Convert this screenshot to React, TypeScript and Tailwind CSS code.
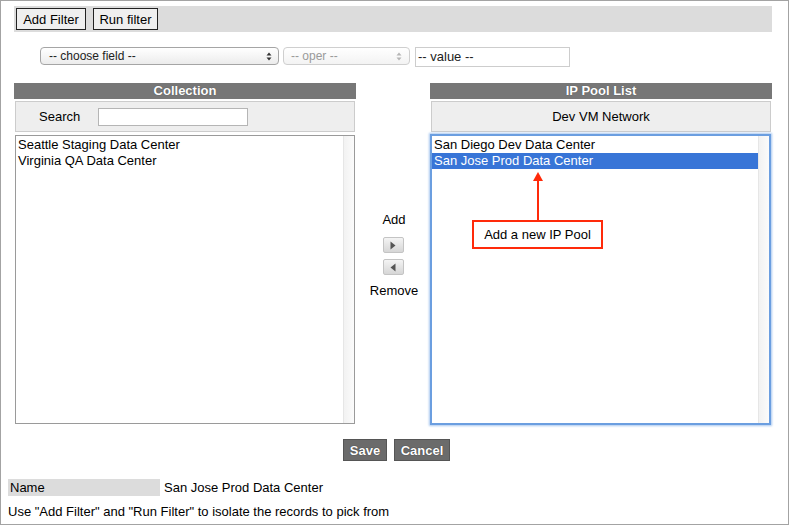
import React from "react";

const font = { fontFamily: '"Liberation Sans", Arial, sans-serif' };

function SelectArrows({ color }: { color: string }) {
  return (
    <svg width="6" height="9" viewBox="0 0 6 9" className="shrink-0">
      <path d="M0.5 3.5 L3 0.5 L5.5 3.5 Z" fill={color} />
      <path d="M0.5 5.5 L3 8.5 L5.5 5.5 Z" fill={color} />
    </svg>
  );
}

function ListBox({ items, selected, focus }: { items: string[]; selected?: number; focus?: boolean }) {
  return (
    <div
      className={
        focus
          ? "relative h-[291px] w-[341px] border-2 border-[#6b9ee0] shadow-[0_0_2px_1px_#a9c8ef] bg-white flex"
          : "relative h-[289px] w-[340px] ml-[1px] border border-[#9a9a9a] bg-white flex"
      }
    >
      <div className="flex-1 flex flex-col pt-[1px]">
        {items.map((t, i) => (
          <div
            key={t}
            className={
              i === selected
                ? "h-[16px] leading-[16px] pl-[2px] text-[13px] bg-[#3875d7] text-white"
                : "h-[16px] leading-[16px] pl-[2px] text-[13px] text-black"
            }
          >
            {t}
          </div>
        ))}
      </div>
      <div className="w-[11px] h-full border-l border-[#e6e6e6] bg-gradient-to-r from-[#f2f2f2] to-[#fbfbfb]" />
    </div>
  );
}

export default function App() {
  return (
    <div style={font} className="w-[790px] h-[526px] bg-white text-black">
      <div className="relative w-[789px] h-[525px] border border-[#a3a3a3] flex flex-col">
        {/* toolbar */}
        <div className="mt-[5px] ml-[13px] w-[758px] h-[26px] bg-[#dcdcdc] flex items-center pl-[2px] gap-[7px]">
          <button className="h-[22px] w-[70px] border border-[#222] bg-[#efefef] text-[13px] leading-none">
            Add Filter
          </button>
          <button className="h-[22px] w-[65px] border border-[#222] bg-[#efefef] text-[13px] leading-none">
            Run filter
          </button>
        </div>

        {/* filter row */}
        <div className="mt-[15px] ml-[39px] flex items-start">
          <div className="w-[239px] h-[18px] rounded-[4px] border border-[#a5a5a5] bg-gradient-to-b from-white to-[#ececec] flex items-center pl-[8px] pr-[6px] text-[12px] text-[#222]">
            <span className="flex-1">-- choose field --</span>
            <SelectArrows color="#333" />
          </div>
          <div className="ml-[4px] w-[127px] h-[18px] rounded-[4px] border border-[#cfcfcf] bg-gradient-to-b from-white to-[#f3f3f3] flex items-center pl-[7px] pr-[7px] text-[12px] text-[#9a9a9a]">
            <span className="flex-1">-- oper --</span>
            <SelectArrows color="#b5b5b5" />
          </div>
          <div className="ml-[5px] w-[155px] h-[20px] border border-[#cdcdcd] bg-white flex items-center pl-[2px] text-[13px] text-[#222]">
            -- value --
          </div>
        </div>

        {/* panels */}
        <div className="mt-[16px] ml-[13px] flex">
          {/* left */}
          <div className="w-[342px] flex flex-col">
            <div className="h-[16px] bg-[#777777] text-white font-bold text-[13px] leading-[16px] text-center [text-shadow:0_0_1px_#444]">
              Collection
            </div>
            <div className="mt-[2px] ml-[1px] w-[340px] h-[31px] bg-[#eeeeee] border border-[#cccccc] flex items-center">
              <span className="ml-[23px] w-[59px] text-[13px]">Search</span>
              <div className="w-[150px] h-[18px] border border-[#b5b5b5] bg-white" />
            </div>
            <div className="mt-[3px]">
              <ListBox items={["Seattle Staging Data Center", "Virginia QA Data Center"]} />
            </div>
          </div>

          {/* middle */}
          <div className="w-[74px] flex flex-col items-center pt-[129px]">
            <div className="text-[13px] leading-[16px] ml-[2px]">Add</div>
            <div className="mt-[9px] w-[21px] h-[16px] rounded-[2px] border border-[#c4c4c4] bg-gradient-to-b from-[#f4f4f4] to-[#d6d6d6] flex items-center justify-center">
              <svg width="6" height="9" viewBox="0 0 6 9">
                <path d="M0.5 0.5 L5.5 4.5 L0.5 8.5 Z" fill="#555" />
              </svg>
            </div>
            <div className="mt-[6px] w-[21px] h-[16px] rounded-[2px] border border-[#c4c4c4] bg-gradient-to-b from-[#f4f4f4] to-[#d6d6d6] flex items-center justify-center">
              <svg width="6" height="9" viewBox="0 0 6 9">
                <path d="M5.5 0.5 L0.5 4.5 L5.5 8.5 Z" fill="#555" />
              </svg>
            </div>
            <div className="mt-[8px] text-[13px] leading-[16px] ml-[2px]">Remove</div>
          </div>

          {/* right */}
          <div className="relative w-[342px] flex flex-col">
            <div className="h-[16px] bg-[#777777] text-white font-bold text-[13px] leading-[16px] text-center [text-shadow:0_0_1px_#444]">
              IP Pool List
            </div>
            <div className="mt-[2px] ml-[1px] w-[340px] h-[31px] bg-[#eeeeee] border border-[#cccccc] flex items-center justify-center text-[13px]">
              Dev VM Network
            </div>
            <div className="mt-[2px]">
              <ListBox items={["San Diego Dev Data Center", "San Jose Prod Data Center"]} selected={1} focus />
            </div>

            {/* annotation */}
            <svg className="absolute left-[102px] top-[89px]" width="12" height="49" viewBox="0 0 12 49">
              <path d="M6 0 L11 9 L1 9 Z" fill="#ff2a0a" />
              <rect x="5" y="8" width="2" height="41" fill="#ff2a0a" />
            </svg>
            <div className="absolute left-[42px] top-[137px] w-[131px] h-[29px] border-2 border-[#ff2a0a] bg-white flex items-center justify-center text-[13px]">
              Add a new IP Pool
            </div>
          </div>
        </div>

        {/* save/cancel */}
        <div className="mt-[14px] flex justify-center gap-[7px] pl-[4px]">
          <button className="h-[22px] w-[44px] bg-[#6b6b6b] border border-[#555] text-white font-bold text-[13px] leading-none [text-shadow:0_0_1px_#222]">
            Save
          </button>
          <button className="h-[22px] w-[56px] bg-[#6b6b6b] border border-[#555] text-white font-bold text-[13px] leading-none [text-shadow:0_0_1px_#222]">
            Cancel
          </button>
        </div>

        {/* name row */}
        <div className="mt-[18px] ml-[7px] flex items-center h-[17px]">
          <div className="w-[152px] h-[17px] bg-[#dcdcdc] pl-[2px] text-[13px] leading-[17px]">Name</div>
          <div className="ml-[4px] text-[13px] leading-[17px]">San Jose Prod Data Center</div>
        </div>

        <div className="mt-[8px] ml-[7px] text-[13px] leading-[16px]">
          Use "Add Filter" and "Run Filter" to isolate the records to pick from
        </div>
      </div>
    </div>
  );
}
